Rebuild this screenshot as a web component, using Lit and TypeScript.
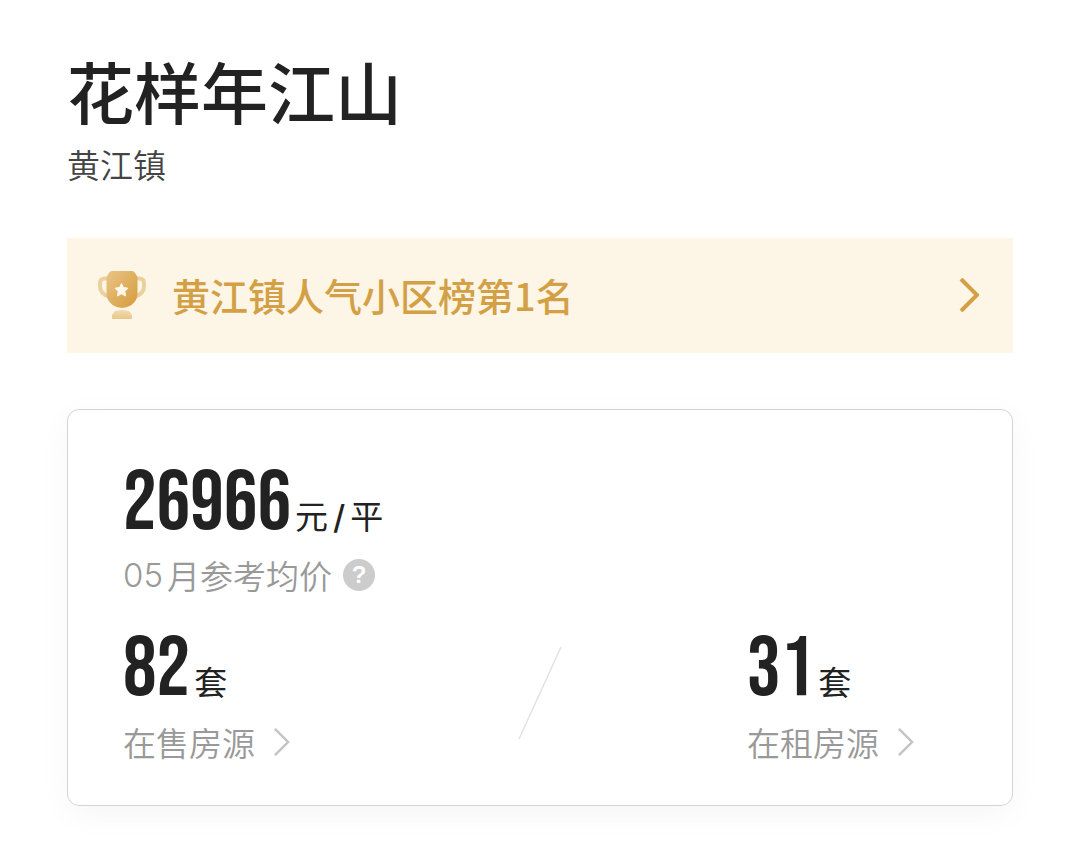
import { LitElement, html, css, svg } from "lit";
import { customElement, property } from "lit/decorators.js";

@customElement("chevron-icon")
class ChevronIcon extends LitElement {
  static styles = css`
    :host {
      display: block;
      width: 20px;
      height: 34px;
    }
    svg {
      display: block;
      width: 100%;
      height: 100%;
    }
  `;

  @property({ type: Number }) weight = 3;

  render() {
    return html`<svg viewBox="0 0 20 34" fill="none" aria-hidden="true">
      <path d="M2 1 18 17 2 33" stroke="currentColor" stroke-width=${this.weight} />
    </svg>`;
  }
}

const figures = css`
  .value {
    display: flex;
    align-items: baseline;
    gap: 4px;
    color: #222;
  }
  .number {
    font: 400 84px/76px "Bebas Neue", "Roboto Condensed", sans-serif;
  }
  .unit {
    font-size: 33px;
    font-weight: 400;
    line-height: 40px;
  }
`;

@customElement("listing-count")
class ListingCount extends LitElement {
  static styles = [
    figures,
    css`
      :host {
        display: block;
        width: 210px;
      }
      .link {
        display: flex;
        align-items: center;
        gap: 18px;
        margin-top: 12px;
        color: #999;
        font-size: 33px;
        font-weight: 350;
        line-height: 44px;
        text-decoration: none;
      }
      .arrow {
        width: 17px;
        height: 28px;
        color: #c4c4c4;
      }
    `,
  ];

  @property({ type: Number }) count = 0;
  @property() label = "";

  render() {
    return html`
      <div class="value"><span class="number">${this.count}</span><span class="unit">套</span></div>
      <a class="link" href="#">${this.label}<chevron-icon class="arrow" .weight=${3}></chevron-icon></a>
    `;
  }
}

const trophy = svg`
  <defs>
    <linearGradient id="cup" x1="0" y1="0" x2="1" y2="1">
      <stop offset="0" stop-color="#e9c488" />
      <stop offset="1" stop-color="#d59b3a" />
    </linearGradient>
    <linearGradient id="base" x1="0" y1="0" x2="0" y2="1">
      <stop offset="0" stop-color="#f1dcb2" />
      <stop offset="1" stop-color="#e8c68a" />
    </linearGradient>
  </defs>
  <path d="M11 8.500H8Q3 8.500 3 13v3q0 8 9 10.500M39 8.500h3q5 0 5 4.500v3q0 8-9 10.500" fill="none" stroke="#ecd19c" stroke-width="4" />
  <path d="M15 1h20q2 0 3 2l2.500 4v17q0 6-6 11-5 3-9.500 3t-9.500-3q-6-5-6-11V7L12 3q1-2 3-2z" fill="url(#cup)" />
  <path d="M18 41q7-2 14 0l3 4v3q0 1-1 1H16q-1 0-1-1v-3z" fill="url(#base)" />
  <path d="m24.500 13.500 2 4 4.500.7-3.200 3.200.8 4.600-4.100-2.200-4.100 2.200.8-4.600L18 18.200l4.500-.7z" fill="#fff8ea" stroke="#fff8ea" stroke-linejoin="round" />
`;

@customElement("app-root")
class AppRoot extends LitElement {
  static styles = [
    figures,
    css`
      :host {
        display: block;
        box-sizing: border-box;
        min-height: 100vh;
        padding: 52px 67px 62px;
        background: #fff;
        color: #222;
        font-family: "Noto Sans CJK SC", sans-serif;
      }
      .title {
        margin: 0;
        font-size: 67px;
        font-weight: 500;
        line-height: 76px;
      }
      .district {
        margin: 14px 0 0;
        color: #444;
        font-size: 33px;
        font-weight: 350;
        line-height: 44px;
      }
      .banner {
        display: flex;
        align-items: center;
        margin-top: 52px;
        padding: 29px 34px 30px 30px;
        background: #fdf5e6;
        color: #d3a045;
        font-size: 38px;
        font-weight: 500;
        line-height: 56px;
        text-decoration: none;
      }
      .trophy {
        width: 50px;
        height: 50px;
        margin-right: 25px;
      }
      .banner-arrow {
        margin-left: auto;
      }
      .card {
        margin-top: 56px;
        padding: 56px 55px 41px;
        border: 1px solid #d4d4d4;
        border-radius: 12px;
        box-shadow: 0 8px 32px rgba(0, 0, 0, 0.04);
      }
      .per {
        margin: 0 5px;
        font-family: Inter, sans-serif;
        font-weight: 500;
      }
      .caption {
        display: flex;
        align-items: center;
        margin-top: 11px;
        color: #999;
        font-size: 33px;
        font-weight: 350;
        line-height: 44px;
      }
      .month {
        margin-right: 4px;
        font-family: Inter, sans-serif;
        font-weight: 300;
      }
      .help {
        width: 32px;
        height: 32px;
        margin-left: 11px;
        padding: 0;
        border: 0;
        border-radius: 50%;
        background: #ccc;
        color: #fff;
        font: 700 24px/32px "Liberation Sans", sans-serif;
      }
      .counts {
        display: flex;
        justify-content: space-between;
        align-items: flex-start;
        margin-top: 35px;
      }
      .slash {
        width: 44px;
        height: 94px;
        margin-top: 14px;
      }
    `,
  ];

  render() {
    return html`
      <h1 class="title">花样年江山</h1>
      <p class="district">黄江镇</p>
      <a class="banner" href="#">
        <svg class="trophy" viewBox="0 0 50 50" aria-hidden="true">${trophy}</svg>
        黄江镇人气小区榜第1名
        <chevron-icon class="banner-arrow" .weight=${4}></chevron-icon>
      </a>
      <section class="card">
        <div class="value">
          <span class="number">26966</span><span class="unit">元<span class="per">/</span>平</span>
        </div>
        <div class="caption">
          <span class="month">05</span>月参考均价
          <button class="help" type="button" aria-label="均价说明">?</button>
        </div>
        <div class="counts">
          <listing-count .count=${82} .label=${"在售房源"}></listing-count>
          <svg class="slash" viewBox="0 0 44 94" aria-hidden="true">
            <path d="M1 93 43 1" stroke="#e2e2e2" stroke-width="1.500" />
          </svg>
          <listing-count .count=${31} .label=${"在租房源"}></listing-count>
        </div>
      </section>
    `;
  }
}
